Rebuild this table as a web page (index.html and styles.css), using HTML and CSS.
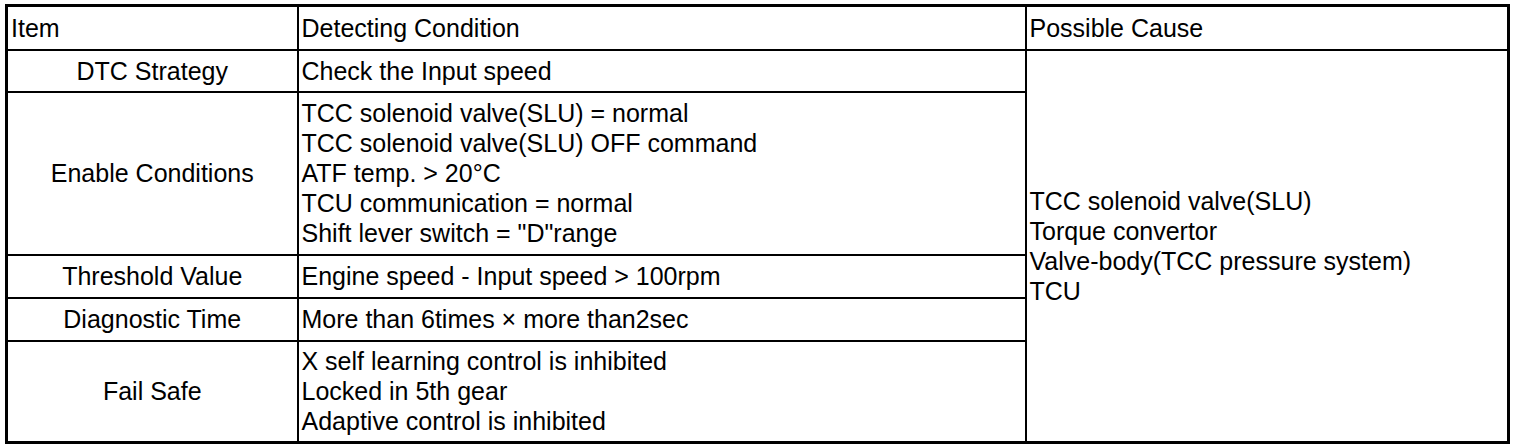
FILE: index.html
```html
<!DOCTYPE html>
<html>
<head>
<meta charset="utf-8">
<link rel="stylesheet" href="styles.css">
</head>
<body>
<table class="dtc">
  <colgroup>
    <col class="c1"><col class="c2"><col class="c3">
  </colgroup>
  <tr class="r-head">
    <td class="left">Item</td>
    <td class="left">Detecting Condition</td>
    <td class="left">Possible Cause</td>
  </tr>
  <tr class="r-strategy">
    <td class="center">DTC Strategy</td>
    <td class="left">Check the Input speed</td>
    <td class="left cause" rowspan="5">TCC solenoid valve(SLU)<br>Torque convertor<br>Valve-body(TCC pressure system)<br>TCU</td>
  </tr>
  <tr class="r-enable">
    <td class="center">Enable Conditions</td>
    <td class="left">TCC solenoid valve(SLU) = normal<br>TCC solenoid valve(SLU) OFF command<br>ATF temp. &gt; 20°C<br>TCU communication = normal<br>Shift lever switch = "D"range</td>
  </tr>
  <tr class="r-threshold">
    <td class="center">Threshold Value</td>
    <td class="left">Engine speed - Input speed &gt; 100rpm</td>
  </tr>
  <tr class="r-time">
    <td class="center">Diagnostic Time</td>
    <td class="left">More than 6times × more than2sec</td>
  </tr>
  <tr class="r-fail">
    <td class="center">Fail Safe</td>
    <td class="left">X self learning control is inhibited<br>Locked in 5th gear<br>Adaptive control is inhibited</td>
  </tr>
</table>
</body>
</html>
```

FILE: styles.css
```css
html, body {
  margin: 0;
  padding: 0;
  background: #fff;
}
body {
  padding: 4px 0 0 5px;
  font-family: "Liberation Sans", Arial, sans-serif;
  font-size: 25px;
  color: #000;
}
.dtc {
  border-collapse: collapse;
  table-layout: fixed;
  width: 1502px;
  border: 3px solid #000;
}
.c1 { width: 291px; }
.c2 { width: 728px; }
.c3 { width: 483px; }
.dtc td {
  border: 2px solid #000;
  padding: 0 3px;
  line-height: 30px;
  vertical-align: middle;
}
.dtc .left { text-align: left; }
.dtc .center { text-align: center; }
.r-head { height: 44px; }
.r-strategy { height: 42px; }
.r-enable { height: 163px; }
.r-threshold { height: 43px; }
.r-time { height: 43px; }
.r-fail { height: 102px; }
```
